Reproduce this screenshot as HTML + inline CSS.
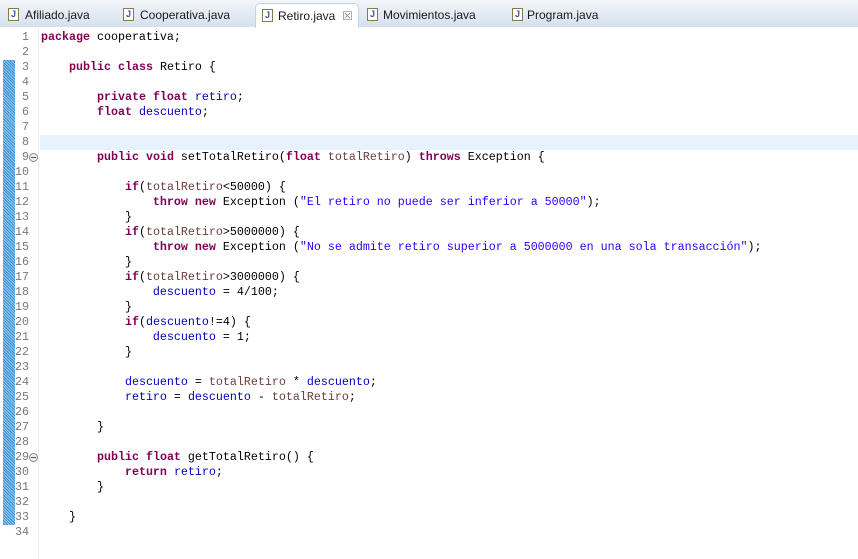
<!DOCTYPE html>
<html><head><meta charset="utf-8"><style>
*{margin:0;padding:0;box-sizing:border-box}
body{width:858px;height:559px;overflow:hidden;background:#fff;font-family:"Liberation Sans",sans-serif;position:relative}
#tabs{position:absolute;left:0;top:0;width:858px;height:27px;background:linear-gradient(#f3f6fa,#d6e1ee);border-bottom:1px solid #d6e1ee}
.tab{position:absolute;top:0;height:27px;font-size:12px;color:#1a1a1a;line-height:30px}
.tab .ic{position:absolute;top:8px;width:11px;height:13px;border:1px solid #8a7a4a;background:#fff;font-size:9px;font-weight:bold;color:#3a5a9a;line-height:11px;text-align:center}
.act{background:#fff;border:1px solid #c5d2e0;border-bottom:none;border-radius:5px 5px 0 0;top:3px;height:25px;line-height:25px}
#gut{position:absolute;left:0;top:28px;width:39px;height:531px;border-right:1px solid #eee}
#bar{position:absolute;left:3px;top:60px;width:12px;height:465px;background-image:repeating-linear-gradient(45deg,#8cc6f0 0 1px,#3a94dc 1px 2px)}
.ln{position:absolute;width:29px;text-align:right;font:11.67px "Liberation Mono",monospace;color:#787878;height:15px;line-height:15px}
#code{position:absolute;left:41px;top:30px;font:11.67px/15px "Liberation Mono",monospace;color:#000;white-space:pre}
#hl{position:absolute;left:40px;top:135px;width:818px;height:15px;background:#e8f2fe}
.k{color:#7f0055;font-weight:bold}.f{color:#0000c0}.s{color:#2a00ff}.p{color:#6a3e3e}
.fold{position:absolute;left:29px;width:9px;height:9px;border:1px solid #8a8a8a;border-radius:50%;background:#eee}
.fold:after{content:"";position:absolute;left:1px;top:3px;width:5px;height:1px;background:#555}
</style></head><body>
<div id="tabs">
<div class="tab" style="left:8px"><span class="ic" style="left:0">J</span><span style="margin-left:17px">Afiliado.java</span></div>
<div class="tab" style="left:123px"><span class="ic" style="left:0">J</span><span style="margin-left:17px">Cooperativa.java</span></div>
<div class="tab act" style="left:255px;width:104px"><span class="ic" style="left:6px;top:5px">J</span><span style="margin-left:22px">Retiro.java</span><span style="position:absolute;left:86px;color:#888;font-size:12px">☒</span></div>
<div class="tab" style="left:367px"><span class="ic" style="left:0">J</span><span style="margin-left:16px">Movimientos.java</span></div>
<div class="tab" style="left:512px"><span class="ic" style="left:0">J</span><span style="margin-left:15px">Program.java</span></div>
</div>
<div id="gut"></div>
<div id="bar"></div>
<div id="hl"></div>
<div id="lns"></div>
<div class="fold" style="top:153px"></div>
<div class="fold" style="top:453px"></div>
<script>
var h='';for(var i=1;i<=34;i++){h+='<div class="ln" style="left:0;top:'+(30+(i-1)*15)+'px">'+i+'</div>';}
document.getElementById('lns').innerHTML=h;
</script>
<div id="code"><span class="k">package</span> cooperativa;

    <span class="k">public</span> <span class="k">class</span> Retiro {

        <span class="k">private</span> <span class="k">float</span> <span class="f">retiro</span>;
        <span class="k">float</span> <span class="f">descuento</span>;


        <span class="k">public</span> <span class="k">void</span> setTotalRetiro(<span class="k">float</span> <span class="p">totalRetiro</span>) <span class="k">throws</span> Exception {

            <span class="k">if</span>(<span class="p">totalRetiro</span>&lt;50000) {
                <span class="k">throw</span> <span class="k">new</span> Exception (<span class="s">"El retiro no puede ser inferior a 50000"</span>);
            }
            <span class="k">if</span>(<span class="p">totalRetiro</span>&gt;5000000) {
                <span class="k">throw</span> <span class="k">new</span> Exception (<span class="s">"No se admite retiro superior a 5000000 en una sola transacción"</span>);
            }
            <span class="k">if</span>(<span class="p">totalRetiro</span>&gt;3000000) {
                <span class="f">descuento</span> = 4/100;
            }
            <span class="k">if</span>(<span class="f">descuento</span>!=4) {
                <span class="f">descuento</span> = 1;
            }

            <span class="f">descuento</span> = <span class="p">totalRetiro</span> * <span class="f">descuento</span>;
            <span class="f">retiro</span> = <span class="f">descuento</span> - <span class="p">totalRetiro</span>;

        }

        <span class="k">public</span> <span class="k">float</span> getTotalRetiro() {
            <span class="k">return</span> <span class="f">retiro</span>;
        }

    }
</div>
</body></html>
